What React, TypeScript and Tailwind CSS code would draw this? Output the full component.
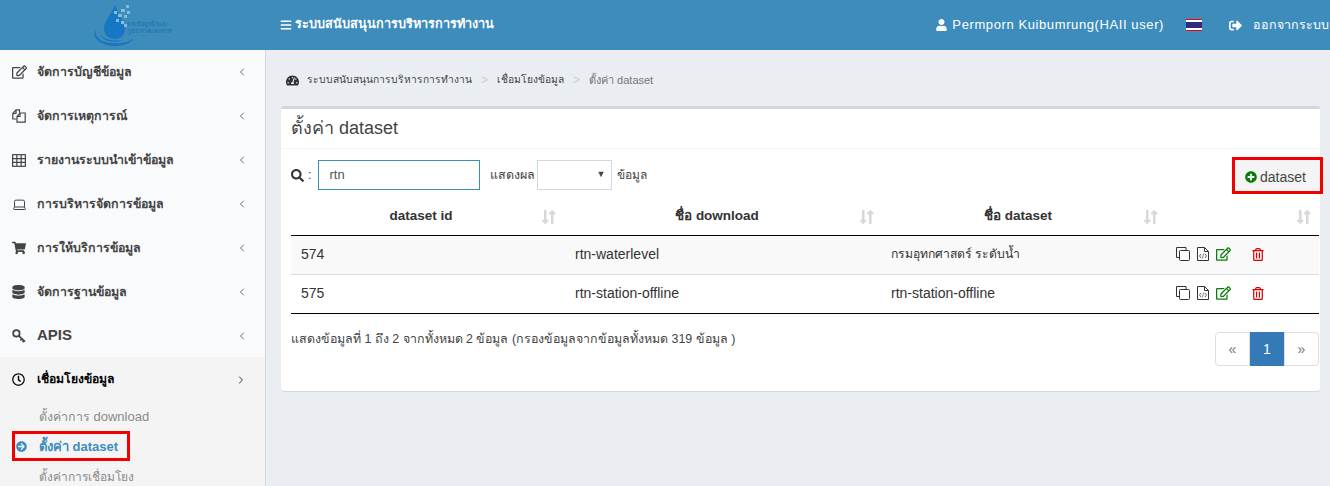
import React from "react";
import { FaTachometerAlt, FaShoppingCart, FaDatabase, FaRegClock, FaArrowCircleRight, FaPlusCircle, FaSearch, FaUser, FaSignOutAlt, FaBars, FaRegTrashAlt, FaRegEdit, FaLongArrowAltUp, FaLongArrowAltDown } from "react-icons/fa";
import { ChevronLeft, ChevronRight, Laptop } from "lucide-react";

const THAI = "font-['Liberation_Sans','Noto_Sans','Noto_Sans_CJK_SC',sans-serif]";

function CopyIcon({ className }: { className?: string }) {
  return (
    <svg className={className} viewBox="0 0 14 14" fill="none" stroke="currentColor" strokeWidth="1">
      <path d="M3.5 10.5H.5V.5h9.5v3" />
      <rect x="3.5" y="3.5" width="10" height="10" rx="1" />
    </svg>
  );
}

function FileCodeIcon({ className }: { className?: string }) {
  return (
    <svg className={className} viewBox="0 0 12 14" fill="none" stroke="currentColor" strokeWidth="1">
      <path d="M.5.5h7l4 4v9H.5z" />
      <path d="M7.5.5v4h4" />
      <path d="M4 7 2.5 9 4 11M8 7l1.5 2L8 11" stroke="#3c6fb4" />
      <path d="M6.7 6.5 5.3 11.5" stroke="#b7791f" />
    </svg>
  );
}

function EventsIcon({ className }: { className?: string }) {
  return (
    <svg className={className} viewBox="0 0 14 14" fill="none" stroke="currentColor" strokeWidth="1.2">
      <path d="M4.5 10H.8V4.5L4 .8h3.5v3" />
      <path d="M4 1v3.5H.8" />
      <path d="M5 13.2V7.5l3-3.5h5.2v9.2z" />
      <path d="M8 4v3.5H5" />
    </svg>
  );
}

function TableIcon({ className }: { className?: string }) {
  return (
    <svg className={className} viewBox="0 0 13 12" fill="none" stroke="currentColor" strokeWidth="1.1">
      <rect x=".6" y=".6" width="11.8" height="10.8" />
      <path d="M.6 4.2h11.8M.6 7.8h11.8M4.5.6v10.8M8.5.6v10.8" />
    </svg>
  );
}

function KeyIcon({ className }: { className?: string }) {
  return (
    <svg className={className} viewBox="0 0 14 14" fill="none" stroke="currentColor" strokeWidth="1.8">
      <circle cx="4.4" cy="4.4" r="3.2" />
      <path d="M6.8 6.8 13 12.6M10 9.8l-1.6 1.7M12 11.6l-1.4 1.5" />
    </svg>
  );
}

const items: [React.ReactNode, string][] = [
  [<FaRegEdit className="w-[15px] h-[14px]" />, "จัดการบัญชีข้อมูล"],
  [<EventsIcon className="w-[14px] h-[14px]" />, "จัดการเหตุการณ์"],
  [<TableIcon className="w-[14px] h-[13px]" />, "รายงานระบบนำเข้าข้อมูล"],
  [<Laptop strokeWidth={1.6} className="w-[15px] h-[15px]" />, "การบริหารจัดการข้อมูล"],
  [<FaShoppingCart className="w-[14px] h-[14px]" />, "การให้บริการข้อมูล"],
  [<FaDatabase className="w-[13px] h-[14px]" />, "จัดการฐานข้อมูล"],
];

function Sort() {
  return (
    <span className="flex w-[15px] justify-center text-[#d8d8d8] -space-x-[2px]">
      <FaLongArrowAltDown className="w-[9px] h-[16px]" />
      <FaLongArrowAltUp className="w-[9px] h-[16px]" />
    </span>
  );
}

function Actions() {
  return (
    <div className="flex items-center w-[153px] pl-[10px]">
      <CopyIcon className="w-[14px] h-[14px] text-[#333]" />
      <FileCodeIcon className="w-[12px] h-[14px] text-[#333] ml-[7px]" />
      <FaRegEdit className="w-[15px] h-[14px] text-[#0a7a0a] ml-[7px]" />
      <FaRegTrashAlt className="w-[12px] h-[13px] text-[#e00000] ml-[21px]" />
    </div>
  );
}

function Row({ a, b, c, shade, thai }: { a: string; b: string; c: string; shade?: boolean; thai?: boolean }) {
  return (
    <div className={`flex items-center h-[39px] pb-[2px] text-[14px] text-[#333] border-b ${shade ? "bg-[#f9f9f9] border-[#ddd]" : "border-black"}`}>
      <div className="w-[274px] pl-[10px]">{a}</div>
      <div className="w-[316px] pl-[10px]">{b}</div>
      <div className={`w-[285px] pl-[10px] ${thai ? "text-[12.2px]" : ""}`}>{c}</div>
      <Actions />
    </div>
  );
}

export default function App() {
  return (
    <div className={`h-[486px] w-[1330px] overflow-hidden bg-[#eaedf2] flex flex-col ${THAI}`}>
      <header className="h-[50px] shrink-0 bg-[#3d8cbc] flex items-center text-white text-[13px] font-bold">
        <div className="w-[280px] shrink-0 flex pl-[90px]">
          <svg width="90" height="50" viewBox="0 0 90 50">
            <path d="M25 5 C22 14 14 20 14 29 C14 35 19 39 25 39 C31 39 35 35 35 29 C35 22 28 14 25 5Z" fill="#1678c2" />
            <path d="M6 29 C0 38 12 46 25 46 C34 46 41 43 44 38 C38 43 28 44 20 43 C10 42 4 36 6 29Z" fill="#1678c2" />
            <path d="M10 33 C12 39 22 42 33 40 C24 44 11 41 10 33Z" fill="#1678c2" />
            <g fill="#86bbdc">
              <rect x="36" y="5" width="3" height="3" />
              <rect x="31" y="9" width="4" height="3" />
              <rect x="37" y="11" width="3" height="3" />
              <rect x="24" y="11" width="3" height="3" />
              <rect x="28" y="14" width="4" height="3" />
              <rect x="34" y="15" width="3" height="3" />
              <rect x="26" y="19" width="3" height="3" />
              <rect x="31" y="21" width="3" height="3" />
              <rect x="34" y="24" width="3" height="3" />
            </g>
            <g fill="#1a6fae" fontSize="5.5" fontWeight="400">
              <text x="37" y="26">คลังข้อมูลน้ำและ</text>
              <text x="37" y="32.5">ภูมิอากาศแห่งชาติ</text>
            </g>
          </svg>
        </div>
        <div className="flex items-center gap-[3px] text-[12.7px]">
          <FaBars className="w-[12px] h-[12px]" />
          <span>ระบบสนับสนุนการบริหารการทำงาน</span>
        </div>
        <div className="ml-auto flex items-center whitespace-nowrap font-normal text-[13px]">
          <FaUser className="w-[11px] h-[12px]" />
          <span className="ml-[5px] tracking-[0.6px]">Permporn Kuibumrung(HAII user)</span>
          <span className="ml-[22px] w-[16px] h-[12px] flex flex-col border-y border-[#e00]">
            <span className="h-[2px] bg-white" />
            <span className="flex-1 bg-[#2d2a80]" />
            <span className="h-[2px] bg-white" />
          </span>
          <FaSignOutAlt className="ml-[27px] w-[13px] h-[13px]" />
          <span className="ml-[11px] w-[77px] text-[12.5px]">ออกจากระบบ</span>
        </div>
      </header>

      <div className="flex flex-1 min-h-0">
        <aside className="w-[266px] shrink-0 bg-[#f9fafc] border-r border-[#d2d6de] overflow-hidden">
          <ul>
            {items.map(([icon, label]) => (
              <li key={label} className="h-[44px] flex items-center text-[12.4px] font-bold text-[#444]">
                <span className="w-[37px] pl-[12px] flex text-[#444]">{icon}</span>
                <span className="flex-1">{label}</span>
                <ChevronLeft strokeWidth={2} className="w-[12px] h-[12px] mr-[17px] text-[#5a6b75]" />
              </li>
            ))}
            <li className="h-[43px] flex items-center text-[15px] font-bold text-[#444]">
              <span className="w-[37px] pl-[12px] flex"><KeyIcon className="w-[14px] h-[14px]" /></span>
              <span className="flex-1">APIS</span>
              <ChevronLeft strokeWidth={2} className="w-[12px] h-[12px] mr-[17px] text-[#5a6b75]" />
            </li>
            <li className="bg-[#f4f4f5] pb-[20px]">
              <div className="h-[44px] pt-[1px] flex items-center text-[12.2px] font-bold text-black">
                <span className="w-[37px] pl-[12px] flex"><FaRegClock className="w-[13px] h-[13px]" /></span>
                <span className="flex-1">เชื่อมโยงข้อมูล</span>
                <ChevronRight strokeWidth={2} className="w-[12px] h-[12px] mr-[18px] text-[#333]" />
              </div>
              <div className="h-[30px] pt-[2px] flex items-center pl-[39px] text-[12.4px] text-[#8a8a8a]">
                <span>ตั้งค่าการ <span className="text-[13px]">download</span></span>
              </div>
              <div className="ml-[12px] w-[118px] h-[30px] pt-[1px] border-[3px] border-[#f00000] flex items-center text-[13px] font-bold text-[#3c8dbc]">
                <FaArrowCircleRight className="ml-[1px] w-[11px] h-[11px]" />
                <span className="ml-[12px]">ตั้งค่า dataset</span>
              </div>
              <div className="h-[30px] pt-[2px] flex items-center pl-[39px] text-[12px] text-[#8a8a8a]">ตั้งค่าการเชื่อมโยง</div>
            </li>
          </ul>
        </aside>

        <main className="flex-1 min-w-0 pl-[15px] pr-[10px]">
          <nav className="h-[56px] flex items-center text-[10.25px] text-[#444] pl-[5px] pt-[4px]">
            <FaTachometerAlt className="w-[13px] h-[13px] text-[#333]" />
            <span className="ml-[8px]">ระบบสนับสนุนการบริหารการทำงาน</span>
            <span className="mx-[9px] text-[#ccc] text-[12px]">&gt;</span>
            <span>เชื่อมโยงข้อมูล</span>
            <span className="mx-[9px] text-[#ccc] text-[12px]">&gt;</span>
            <span className="text-[#777] text-[11px]">ตั้งค่า dataset</span>
          </nav>

          <section className="h-[285px] bg-white rounded-[3px] border-t-[3px] border-[#d2d6de] shadow-[0_1px_1px_rgba(0,0,0,0.1)]">
            <div className="h-[40px] flex items-center px-[10px] text-[18px] text-[#444] border-b border-[#f4f4f4]">ตั้งค่า dataset</div>
            <div className="pl-[10px] pr-[1px]">
              <div className="h-[50px] pt-[2px] flex items-center text-[12.5px] text-[#444]">
                <FaSearch className="w-[13px] h-[13px] text-[#333]" />
                <span className="ml-[4px]">:</span>
                <div className="ml-[7px] w-[162px] h-[30px] border border-[#3c8dbc] flex items-center pl-[10px] text-[13px] text-[#555]">rtn</div>
                <span className="ml-[10px]">แสดงผล</span>
                <div className="ml-[2px] w-[75px] h-[30px] border border-[#d2d6de] flex items-center justify-end pr-[6px] text-[9px] text-[#444]">▼</div>
                <span className="ml-[5px] text-[12px]">ข้อมูล</span>
                <button className="ml-auto mr-[-4px] mt-[1px] w-[91px] h-[37px] border-[3px] border-[#f00000] bg-[#f4f4f4] flex items-center justify-center gap-[3px] pr-[4px] pt-[3px] text-[14px] text-[#444]">
                  <FaPlusCircle className="w-[12px] h-[12px] text-[#0a7a0a]" />
                  dataset
                </button>
              </div>
              <div className="flex items-center h-[38px] mt-[-1px] border-b border-black text-[13.5px] font-bold text-[#333]">
                <div className="w-[274px] flex items-center pr-[9px]"><span className="flex-1 text-center pl-[10px]">dataset id</span><Sort /></div>
                <div className="w-[316px] flex items-center pr-[7px]"><span className="flex-1 text-center pl-[10px]">ชื่อ download</span><Sort /></div>
                <div className="w-[285px] flex items-center pr-[8px]"><span className="flex-1 text-center pl-[12px]">ชื่อ dataset</span><Sort /></div>
                <div className="w-[153px] flex justify-end pr-[8px]"><Sort /></div>
              </div>
              <Row shade thai a="574" b="rtn-waterlevel" c="กรมอุทกศาสตร์ ระดับน้ำ" />
              <Row a="575" b="rtn-station-offline" c="rtn-station-offline" />
              <div className="flex items-start text-[12.45px] text-[#444]">
                <div className="pt-[16px]">แสดงข้อมูลที่ 1 ถึง 2 จากทั้งหมด 2 ข้อมูล (กรองข้อมูลจากข้อมูลทั้งหมด 319 ข้อมูล )</div>
                <div className="ml-auto mt-[18px] flex h-[34px] text-[14px]">
                  <span className="w-[35px] border border-[#ddd] rounded-l-[4px] flex items-center justify-center text-[#777]">«</span>
                  <span className="w-[34px] bg-[#337ab7] text-white flex items-center justify-center">1</span>
                  <span className="w-[35px] border border-[#ddd] rounded-r-[4px] flex items-center justify-center text-[#777]">»</span>
                </div>
              </div>
            </div>
          </section>
        </main>
      </div>
    </div>
  );
}
